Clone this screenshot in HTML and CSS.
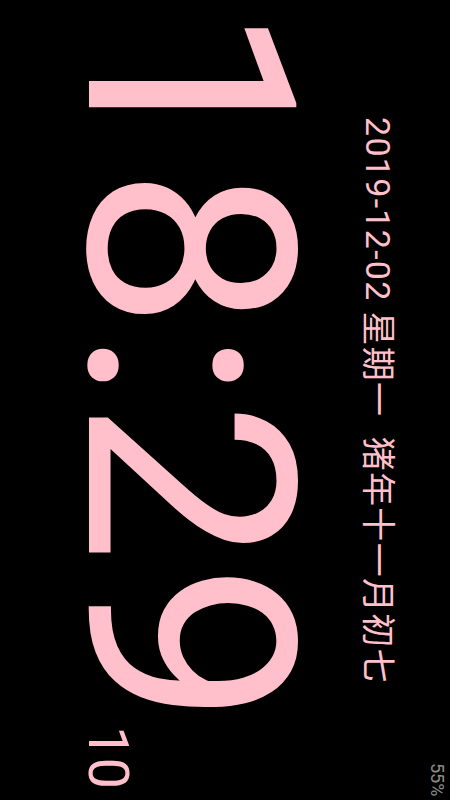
FILE: index.html
```html
<!DOCTYPE html>
<html lang="zh">
<head>
<meta charset="utf-8">
<title>Clock</title>
<link rel="stylesheet" href="styles.css">
</head>
<body>
<main class="stage">
  <div class="battery">55%</div>
  <div class="date">2019-12-02 星期一  猪年十一月初七</div>
  <div class="clock">
    <span class="time">18:29</span>
    <span class="seconds">10</span>
  </div>
</main>
</body>
</html>
```
FILE: styles.css
```css
html, body {
  margin: 0;
  padding: 0;
  background: #000;
}
.stage {
  width: 450px;
  height: 800px;
  overflow: hidden;
  writing-mode: vertical-rl;
  text-orientation: sideways;
  display: flex;
  flex-direction: column;
  align-items: center;
  font-family: Roboto, "Noto Sans CJK SC", sans-serif;
  color: #ffc0cb;
}
.battery {
  align-self: flex-end;
  font-size: 18px;
  line-height: 20px;
  padding-block-start: 3px;
  padding-inline-end: 4px;
  color: #8c8c8c;
}
.date {
  margin-block-start: 29px;
  font-size: 34px;
  line-height: 40px;
  letter-spacing: 1.3px;
  white-space: pre;
}
.clock {
  align-self: flex-start;
  margin-block-start: 25px;
  padding-inline-start: 4px;
  display: flex;
  align-items: baseline;
}
.time {
  font-size: 290px;
  line-height: 290px;
}
.seconds {
  font-size: 56px;
  line-height: 56px;
}
```
